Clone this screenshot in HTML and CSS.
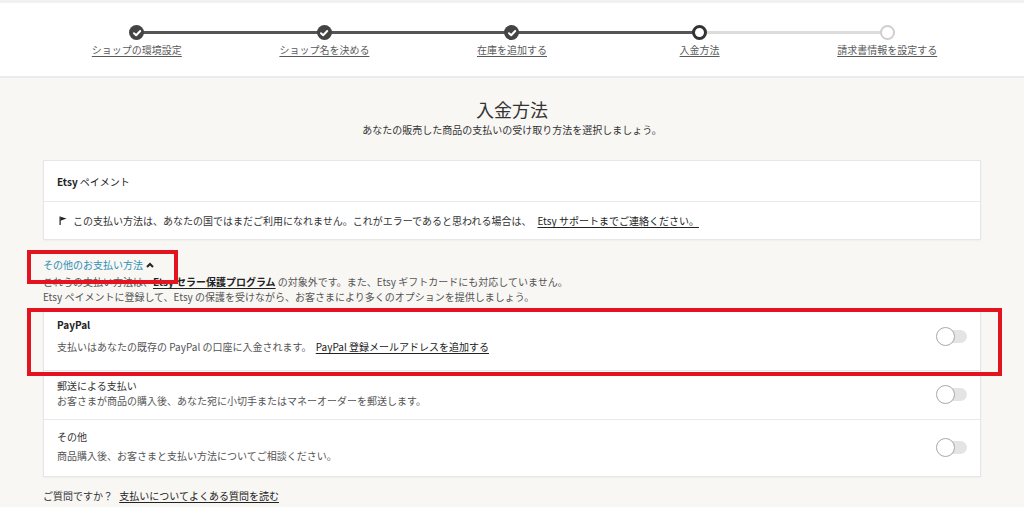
FILE: index.html
```html
<!DOCTYPE html>
<html lang="ja">
<head>
<meta charset="utf-8">
<title>入金方法</title>
<link rel="stylesheet" href="styles.css">
</head>
<body>
<header class="steps-bar">
  <ol class="steps">
    <li class="step done">
      <span class="dot"><svg viewBox="0 0 14 14" width="14" height="14"><polyline points="4,7.2 6.2,9.3 10.2,5" fill="none" stroke="#fff" stroke-width="2" stroke-linecap="round" stroke-linejoin="round"/></svg></span>
      <a class="step-label" href="#">ショップの環境設定</a>
    </li>
    <li class="step done">
      <span class="dot"><svg viewBox="0 0 14 14" width="14" height="14"><polyline points="4,7.2 6.2,9.3 10.2,5" fill="none" stroke="#fff" stroke-width="2" stroke-linecap="round" stroke-linejoin="round"/></svg></span>
      <a class="step-label" href="#">ショップ名を決める</a>
    </li>
    <li class="step done">
      <span class="dot"><svg viewBox="0 0 14 14" width="14" height="14"><polyline points="4,7.2 6.2,9.3 10.2,5" fill="none" stroke="#fff" stroke-width="2" stroke-linecap="round" stroke-linejoin="round"/></svg></span>
      <a class="step-label" href="#">在庫を追加する</a>
    </li>
    <li class="step current">
      <span class="dot"></span>
      <a class="step-label" href="#">入金方法</a>
    </li>
    <li class="step todo">
      <span class="dot"></span>
      <a class="step-label" href="#">請求書情報を設定する</a>
    </li>
  </ol>
</header>

<main class="page">
  <h1 class="title">入金方法</h1>
  <p class="subtitle">あなたの販売した商品の支払いの受け取り方法を選択しましょう。</p>

  <section class="card">
    <div class="row row-head"><b class="brand">Etsy</b>&nbsp;ペイメント</div>
    <div class="row row-note">
      <svg class="flag" viewBox="0 0 8 9" width="8" height="9"><rect x="0.5" y="0.5" width="1.2" height="8.5" fill="#222"/><polygon points="1.5,0.8 7.5,2.6 1.5,4.8" fill="#222"/></svg>
      <span>この支払い方法は、あなたの国ではまだご利用になれません。これがエラーであると思われる場合は、</span>
      <a class="link" href="#">Etsy サポートまでご連絡ください。</a>
    </div>
  </section>

  <div class="other">
    <a class="other-link" href="#">その他のお支払い方法<svg class="chev" viewBox="0 0 8 6" width="8" height="6"><polyline points="1,5 4,2 7,5" fill="none" stroke="#222" stroke-width="2"/></svg></a>
    <p class="other-note">これらの支払い方法は、<a class="link strong" href="#">Etsy セラー保護プログラム</a> の対象外です。また、Etsy ギフトカードにも対応していません。<br>Etsy ペイメントに登録して、Etsy の保護を受けながら、お客さまにより多くのオプションを提供しましょう。</p>
  </div>

  <section class="card options">
    <div class="row opt opt-paypal">
      <div class="opt-text">
        <div class="opt-title bold">PayPal</div>
        <div class="opt-desc">支払いはあなたの既存の PayPal の口座に入金されます。 <a class="link" href="#">PayPal 登録メールアドレスを追加する</a></div>
      </div>
      <span class="switch"><span class="knob"></span></span>
    </div>
    <div class="row opt opt-mail">
      <div class="opt-text">
        <div class="opt-title">郵送による支払い</div>
        <div class="opt-desc">お客さまが商品の購入後、あなた宛に小切手またはマネーオーダーを郵送します。</div>
      </div>
      <span class="switch"><span class="knob"></span></span>
    </div>
    <div class="row opt opt-other">
      <div class="opt-text">
        <div class="opt-title">その他</div>
        <div class="opt-desc">商品購入後、お客さまと支払い方法についてご相談ください。</div>
      </div>
      <span class="switch"><span class="knob"></span></span>
    </div>
  </section>

  <p class="faq">ご質問ですか？ <a class="link" href="#">支払いについてよくある質問を読む</a></p>

  <div class="highlight hl-other"></div>
  <div class="highlight hl-paypal"></div>
</main>
</body>
</html>
```

FILE: styles.css
```css
* { box-sizing: border-box; }

html, body {
  margin: 0;
  padding: 0;
}

body {
  background: #f8f7f4;
  font-family: "Noto Sans CJK JP", "Noto Sans", sans-serif;
  font-size: 10px;
  color: #4a4a4a;
  overflow: hidden;
}

a { color: inherit; }

/* ---------- steps header ---------- */
.steps-bar {
  background: #fff;
  border-top: 3px solid #f1f1f1;
  border-bottom: 2px solid #ececec;
  height: 78px;
}

.steps {
  list-style: none;
  margin: 0 auto;
  padding: 22px 0 0;
  width: 938px;
  display: grid;
  grid-template-columns: repeat(5, 1fr);
}

.step {
  position: relative;
  display: flex;
  flex-direction: column;
  align-items: center;
}

.step::before,
.step::after {
  content: "";
  position: absolute;
  top: 6px;
  height: 3px;
  width: 50%;
  background: #555;
}
.step::before { left: 0; }
.step::after { right: 0; }
.step:first-child::before { display: none; }
.step:last-child::after { display: none; }
.step.current::after { background: #dcdcdc; }
.step.todo::before { background: #dcdcdc; }

.dot {
  position: relative;
  z-index: 1;
  width: 15px;
  height: 15px;
  border-radius: 50%;
  display: flex;
  align-items: center;
  justify-content: center;
}
.done .dot { background: #444; }
.current .dot { background: #fff; border: 3px solid #333; }
.todo .dot { background: #fff; border: 2px solid #cfcfcf; }

.step-label {
  margin-top: 3px;
  font-size: 10px;
  line-height: 14px;
  color: #5a5a5a;
  text-decoration: underline;
  text-underline-offset: 2px;
}

/* ---------- page ---------- */
.page {
  position: relative;
  width: 938px;
  margin: 0 auto;
}

.title {
  margin: 0;
  padding-top: 19px;
  text-align: center;
  font-size: 18px;
  line-height: 24px;
  font-weight: 400;
  color: #333;
}

.subtitle {
  margin: 2px 0 0;
  text-align: center;
  font-size: 10px;
  line-height: 14px;
  color: #333;
}

.card {
  background: #fff;
  border: 1px solid #e6e6e6;
  box-shadow: 0 1px 2px rgba(0,0,0,0.04);
}

.card:first-of-type { margin-top: 23px; }

.row {
  padding: 0 13px;
}
.row + .row { border-top: 1px solid #e9e9e9; }

.row-head {
  height: 40px;
  display: flex;
  align-items: center;
  color: #222;
}
.brand { font-weight: 700; }

.row-note {
  height: 38px;
  display: flex;
  align-items: center;
  color: #333;
}
.flag { margin: 0 6px 0 2px; }

.link {
  color: #222;
  text-decoration: underline;
  text-underline-offset: 2px;
  margin-left: 6px;
}
.link.strong { font-weight: 700; margin-left: 0; }

/* ---------- other methods ---------- */
.other { margin-top: 17px; }

.other-link {
  display: inline-flex;
  align-items: center;
  gap: 3px;
  line-height: 14px;
  color: #2f8fb4;
  text-decoration: none;
}
.chev { margin-top: -1px; }

.other-note {
  margin: 2px 0 0;
  line-height: 15px;
  color: #555;
}

.options { margin-top: 4px; }

.opt {
  display: flex;
  align-items: center;
  justify-content: space-between;
  padding: 8px 13px 9px;
}
.opt-title { line-height: 14px; color: #333; }
.opt-title.bold { font-weight: 700; color: #222; }
.opt-desc { line-height: 16px; color: #555; }
.opt-desc .link { margin-left: 2px; }

.opt-paypal { padding-top: 9px; padding-bottom: 15px; }
.opt-paypal .opt-desc { margin-top: 7px; }
.opt-mail { padding-bottom: 10px; }
.opt-other { padding-top: 10px; padding-bottom: 12px; }
.opt-other .opt-desc { margin-top: 4px; }

.switch {
  position: relative;
  width: 31px;
  height: 19px;
  margin-right: 0;
  display: flex;
  align-items: center;
}
.switch::before {
  content: "";
  position: absolute;
  left: 6px;
  right: 0;
  height: 13px;
  border-radius: 7px;
  background: #e4e4e4;
}
.knob {
  position: relative;
  width: 19px;
  height: 19px;
  border-radius: 50%;
  background: #fff;
  border: 1.5px solid #a8a8a8;
}

.faq {
  margin: 12px 0 0;
  line-height: 14px;
  color: #333;
}
.faq .link { margin-left: 4px; }

/* ---------- annotation boxes ---------- */
.highlight {
  position: absolute;
  border: 4px solid #e3141f;
  pointer-events: none;
}
.hl-other {
  left: -16px;
  top: 172px;
  width: 151px;
  height: 34px;
}
.hl-paypal {
  left: -16px;
  top: 230px;
  width: 975px;
  height: 68px;
}
```
